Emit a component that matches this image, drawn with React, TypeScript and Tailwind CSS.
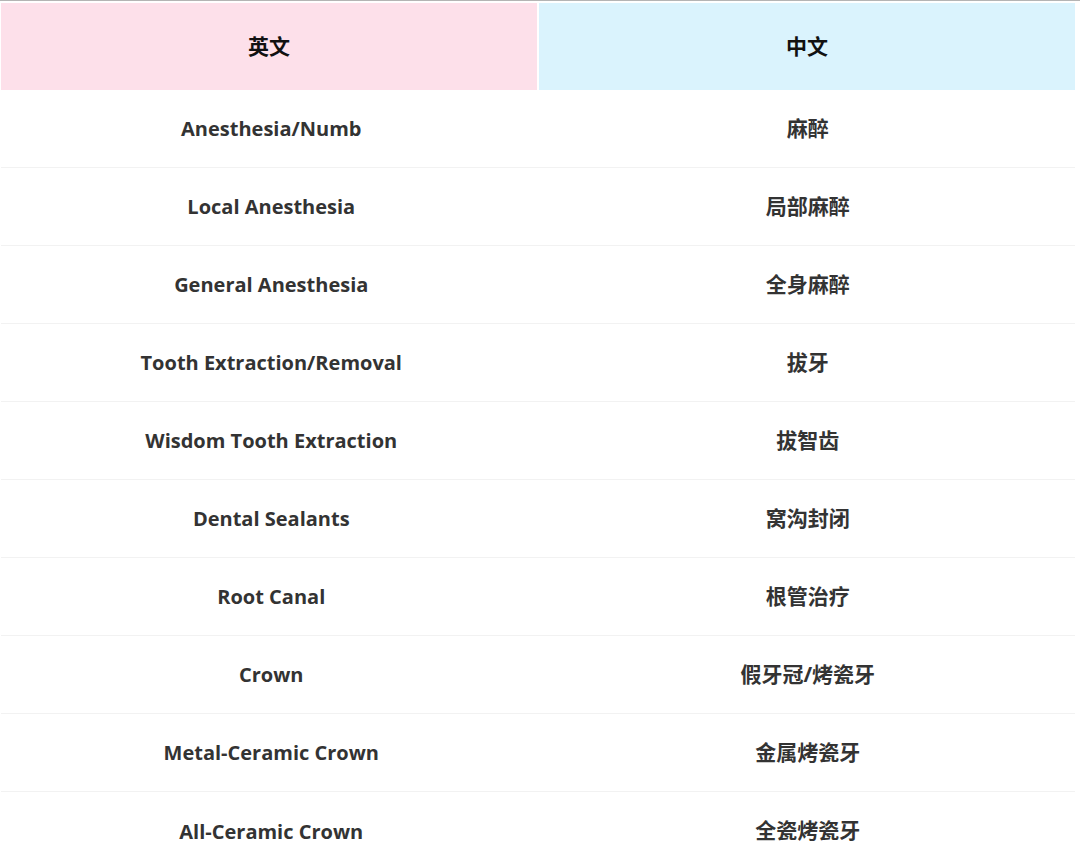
import React from "react";

const rows: [string, string][] = [
  ["Anesthesia/Numb", "麻醉"],
  ["Local Anesthesia", "局部麻醉"],
  ["General Anesthesia", "全身麻醉"],
  ["Tooth Extraction/Removal", "拔牙"],
  ["Wisdom Tooth Extraction", "拔智齿"],
  ["Dental Sealants", "窝沟封闭"],
  ["Root Canal", "根管治疗"],
  ["Crown", "假牙冠/烤瓷牙"],
  ["Metal-Ceramic Crown", "金属烤瓷牙"],
  ["All-Ceramic Crown", "全瓷烤瓷牙"],
];

const font = {
  fontFamily: '"Open Sans", "Noto Sans CJK SC", sans-serif',
};

export default function App() {
  return (
    <div className="w-[1080px] h-[866px] overflow-hidden bg-white" style={font}>
      <div className="h-[1px] bg-[#b4b4b4]" />
      <div className="w-[1075px] pt-[2px] pl-[1px]">
        <div className="flex h-[87px] gap-[2px]">
          <div className="flex-1 bg-[#fde0ea] flex items-center justify-center text-[21px] font-bold text-[#111]">
            英文
          </div>
          <div className="flex-1 bg-[#daf3fd] flex items-center justify-center text-[21px] font-bold text-[#111]">
            中文
          </div>
        </div>
        {rows.map(([en, zh], i) => (
          <div
            key={i}
            className={`flex h-[78px] ${i < rows.length - 1 ? "border-b border-[#f2f2f2]" : ""}`}
          >
            <div className="flex-1 flex items-center justify-center pl-[3px] pt-[1px] text-[20px] font-bold text-[#333]">
              {en}
            </div>
            <div className="flex-1 flex items-center justify-center pl-[2px] text-[21px] font-bold text-[#333]">
              {zh}
            </div>
          </div>
        ))}
      </div>
    </div>
  );
}
